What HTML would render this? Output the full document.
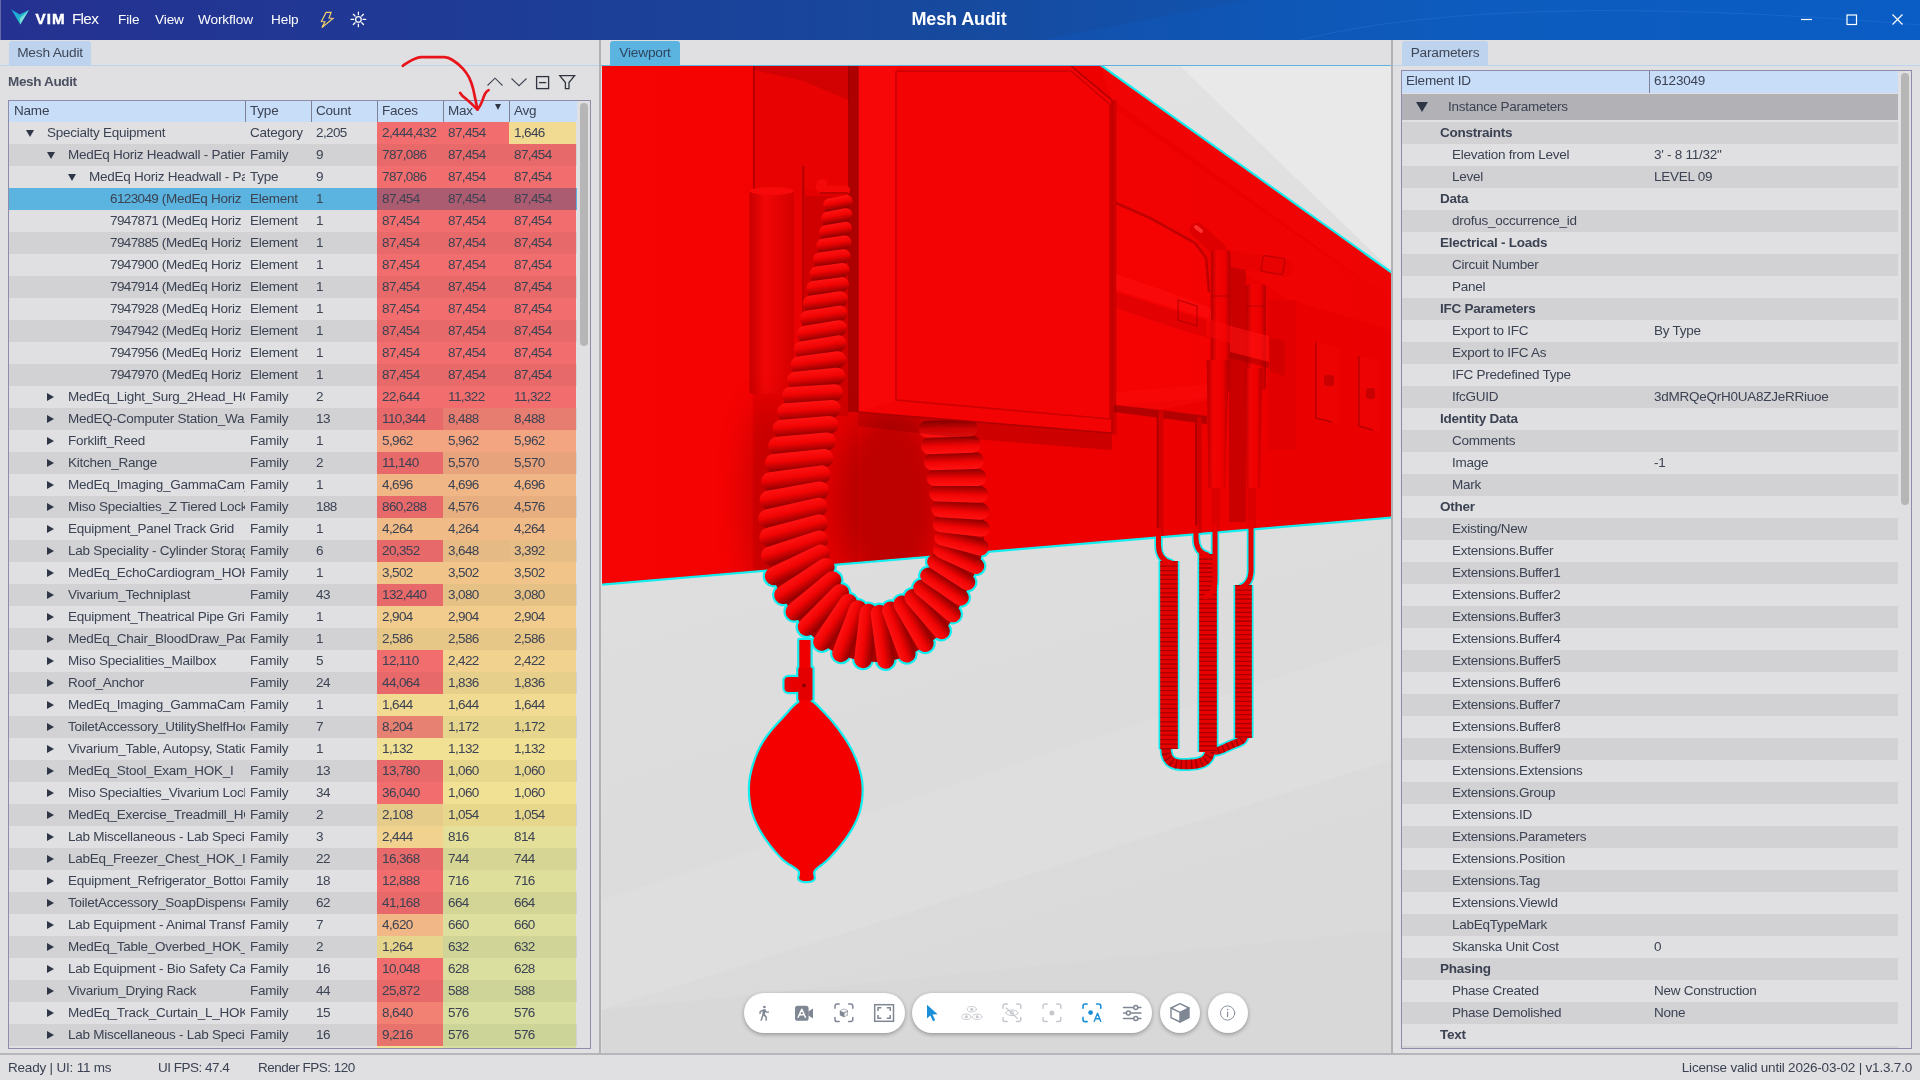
<!DOCTYPE html>
<html lang="en">
<head>
<meta charset="utf-8">
<title>Mesh Audit - VIM Flex</title>
<style>
*{box-sizing:border-box;margin:0;padding:0}
html,body{width:1920px;height:1080px;overflow:hidden}
body{background:#e0e0e3;font-family:"Liberation Sans",sans-serif;font-size:13.5px;color:#3b4252;position:relative}
.abs{position:absolute}
#titlebar{position:absolute;left:0;top:0;width:1920px;height:40px;background:linear-gradient(90deg,#253190 0%,#1e3b95 25%,#164a9f 50%,#0e59b8 75%,#0b5cc2 100%);color:#fff;overflow:hidden}
#titlebar .menu{position:absolute;top:0;height:40px;line-height:39px;font-size:13.6px;letter-spacing:-0.1px;color:#fff;white-space:nowrap}
#titlebar .brand{position:absolute;left:35.5px;top:0;height:40px;line-height:38.5px;font-size:15.5px;color:#fff;white-space:nowrap}
#titlebar .brand b{font-weight:bold;letter-spacing:1.1px;font-size:15.2px;-webkit-text-stroke:0.45px #fff}#titlebar .brand span{margin-left:6.1px;letter-spacing:-0.7px;font-size:15.4px}
#titlebar .title{position:absolute;left:0;width:1918px;top:0;height:40px;line-height:39.600px;text-align:center;font-size:18px;font-weight:bold;color:#fff;letter-spacing:-0.12px}
.tab{position:absolute;top:41px;height:24px;line-height:23.500px;font-size:13.700px;border-radius:3px 3px 0 0;color:#3f4656;background:#bdd3ee;text-align:center;white-space:nowrap;letter-spacing:-0.2px}
.tab.active{background:#5bb4e0;color:#2f4560}
.hline{position:absolute;height:1px}
.vsplit{position:absolute;top:40px;width:2px;height:1013px;background:#b2b2b6}
#status{position:absolute;left:0;top:1053px;width:1920px;height:27px;border-top:2px solid #b6b6ba;background:#e0e0e3;font-size:13.5px;color:#3b4252}
#status span{position:absolute;top:0;line-height:25px;white-space:nowrap;letter-spacing:-0.2px}
.tbl{position:absolute;border:1px solid #8d8dab;overflow:hidden}
.row{position:absolute;left:0;height:22px;line-height:21px;white-space:nowrap;letter-spacing:-0.25px}
.row.d{background:#d2d2d5}
.row.sel{background:#5bb4e0}
.c{position:absolute;top:0;height:22px;overflow:hidden;white-space:nowrap}
.c.n,.ls{letter-spacing:-0.62px}
#left,#right,#status,#titlebar,#vp{will-change:transform}
.hdr{position:absolute;left:0;top:0;height:21px;background:#c8ddf8;line-height:20px;letter-spacing:-0.2px}
.hdr .c{height:21px;border-left:1px solid #7f8296}
.tri{position:absolute;width:0;height:0}
.tri.dn{border-left:4.3px solid transparent;border-right:4.3px solid transparent;border-top:7.3px solid #2f3646}
.tri.rt{border-top:4.35px solid transparent;border-bottom:4.35px solid transparent;border-left:7.4px solid #2f3646}
.sb{position:absolute;background:#b6b6b6;border-radius:4px}
b,.b{font-weight:bold}
</style>
</head>
<body>
<div id="titlebar">
<svg class="abs" style="left:0;top:0" width="1920" height="40" viewBox="0 0 1920 40">
<rect x="0" y="0" width="1" height="40" fill="#6568a4"/>
<polygon points="1040,40 1250,0 1920,0 1920,40" fill="#0a62d4" opacity="0.2"/>
<path d="M1300 40 Q1500 -10 1920 25" stroke="#3a86e8" stroke-width="1" fill="none" opacity="0.25"/>
</svg>
<svg class="abs" style="left:10px;top:8px" width="20" height="18" viewBox="10 8 20 18">
<defs><linearGradient id="lg1" x1="0" y1="0" x2="0.6" y2="1"><stop offset="0" stop-color="#1b9be2"/><stop offset="1" stop-color="#25c8c0"/></linearGradient></defs>
<path d="M11.200 9.200 L19.600 14.500 L28.900 9.900 L20.300 24.500 Z" fill="url(#lg1)"/>
<path d="M19.800 18.500 L28.900 9.900 L20.300 24.500 Z" fill="#9fe6de" opacity="0.750"/>
</svg>
<div class="brand"><b>VIM</b><span>Flex</span></div>
<div class="menu" style="left:118px">File</div>
<div class="menu" style="left:155px">View</div>
<div class="menu" style="left:198px">Workflow</div>
<div class="menu" style="left:271px">Help</div>
<svg class="abs" style="left:316px;top:8px" width="22" height="24" viewBox="316 8 22 24"><path d="M326.100 12.400 L331.100 12.400 L329 18 L333 18.400 L321.900 27.500 L324.900 21.800 L321.400 21.600 Z" fill="none" stroke="#f5d36a" stroke-width="1.150" stroke-linejoin="miter"/></svg>
<svg class="abs" style="left:348px;top:9px" width="22" height="22" viewBox="348 9 22 22" fill="none" stroke="#fff" stroke-width="1.250" stroke-linecap="round"><circle cx="358.400" cy="19.400" r="2.800"/><path d="M358.400 12.100v2.600M358.400 24.100v2.600M351.100 19.400h2.600M363.100 19.400h2.600M353.300 14.300l1.750 1.750M361.750 22.750l1.750 1.750M353.300 24.500l1.750-1.750M361.750 16.050l1.750-1.750"/></svg>
<div class="title">Mesh Audit</div>
<svg class="abs" style="left:1780px;top:0" width="140" height="40" viewBox="0 0 140 40" fill="none" stroke="#fff" stroke-width="1.2"><path d="M21 19.5h11"/><rect x="67" y="15" width="9.5" height="9.5"/><path d="M112.5 14.5l10 10M122.5 14.5l-10 10"/></svg>
</div>
<div id="left">
<div class="tab" style="left:9px;width:82px">Mesh Audit</div>
<div class="hline" style="left:0;top:65px;width:599px;background:#bcd3ee"></div>
<div class="abs b" style="left:8px;top:72px;font-size:13.5px;line-height:20px;color:#4b5060;letter-spacing:-0.35px">Mesh Audit</div>
<svg class="abs" style="left:484px;top:72px" width="96" height="20" viewBox="0 0 96 20" fill="none" stroke="#30343e" stroke-width="1.3">
<path d="M3.5 13.5 L11 6.2 L18.5 13.5" stroke-width="1.05" stroke="#3d4352"/>
<path d="M27.5 6.5 L35 13.700 L42.5 6.5" stroke-width="1.05" stroke="#3d4352"/>
<rect x="52.6" y="4.6" width="12" height="12"/><path d="M55 10.6h7.2"/>
<path d="M75.8 3.6h14.8l-5.6 7v6h-3.6v-6z"/>
</svg>

<div class="tbl" style="left:8px;top:100px;width:583px;height:949px">
<div class="hdr" style="width:568px">
<div class="c" style="left:0px;width:236px;border-left:none;padding-left:5px">Name</div>
<div class="c" style="left:236px;width:66px;padding-left:4px">Type</div>
<div class="c" style="left:302px;width:66px;padding-left:4px">Count</div>
<div class="c" style="left:368px;width:66px;padding-left:4px">Faces</div>
<div class="c" style="left:434px;width:66px;padding-left:4px">Max</div>
<div class="c" style="left:500px;width:68px;padding-left:4px">Avg</div>
<div class="tri dn" style="left:486.200px;top:3.200px;border-left-width:3.800px;border-right-width:3.800px;border-top-width:6.600px"></div>
</div>
<div class="row" style="top:21px;width:568px">
<i class="tri dn" style="left:16.9px;top:7.6px"></i>
<div class="c" style="left:38px;width:198px">Specialty Equipment</div>
<div class="c" style="left:241px;width:61px">Category</div>
<div class="c n" style="left:307px;width:61px">2,205</div>
<div class="c n" style="left:368px;width:66px;background:#f26e6e;padding-left:5px">2,444,432</div>
<div class="c n" style="left:434px;width:66px;background:#f26e6e;padding-left:5px">87,454</div>
<div class="c n" style="left:500px;width:67px;background:#f1db92;padding-left:5px">1,646</div>
</div>
<div class="row d" style="top:43px;width:568px">
<i class="tri dn" style="left:37.9px;top:7.6px"></i>
<div class="c" style="left:59px;width:177px">MedEq Horiz Headwall - Patient Care</div>
<div class="c" style="left:241px;width:61px">Family</div>
<div class="c n" style="left:307px;width:61px">9</div>
<div class="c n" style="left:368px;width:66px;background:#e76969;padding-left:5px">787,086</div>
<div class="c n" style="left:434px;width:66px;background:#e76969;padding-left:5px">87,454</div>
<div class="c n" style="left:500px;width:67px;background:#e76969;padding-left:5px">87,454</div>
</div>
<div class="row" style="top:65px;width:568px">
<i class="tri dn" style="left:58.9px;top:7.6px"></i>
<div class="c" style="left:80px;width:156px">MedEq Horiz Headwall - Patient Care</div>
<div class="c" style="left:241px;width:61px">Type</div>
<div class="c n" style="left:307px;width:61px">9</div>
<div class="c n" style="left:368px;width:66px;background:#f26e6e;padding-left:5px">787,086</div>
<div class="c n" style="left:434px;width:66px;background:#f26e6e;padding-left:5px">87,454</div>
<div class="c n" style="left:500px;width:67px;background:#f26e6e;padding-left:5px">87,454</div>
</div>
<div class="row d sel" style="top:87px;width:568px">
<div class="c" style="left:101px;width:135px"><span class="ls">6123049</span> (MedEq Horiz Headwall</div>
<div class="c" style="left:241px;width:61px">Element</div>
<div class="c n" style="left:307px;width:61px">1</div>
<div class="c n" style="left:368px;width:66px;background:#ac5c70;padding-left:5px">87,454</div>
<div class="c n" style="left:434px;width:66px;background:#ac5c70;padding-left:5px">87,454</div>
<div class="c n" style="left:500px;width:67px;background:#ac5c70;padding-left:5px">87,454</div>
</div>
<div class="row" style="top:109px;width:568px">
<div class="c" style="left:101px;width:135px"><span class="ls">7947871</span> (MedEq Horiz Headwall</div>
<div class="c" style="left:241px;width:61px">Element</div>
<div class="c n" style="left:307px;width:61px">1</div>
<div class="c n" style="left:368px;width:66px;background:#f26e6e;padding-left:5px">87,454</div>
<div class="c n" style="left:434px;width:66px;background:#f26e6e;padding-left:5px">87,454</div>
<div class="c n" style="left:500px;width:67px;background:#f26e6e;padding-left:5px">87,454</div>
</div>
<div class="row d" style="top:131px;width:568px">
<div class="c" style="left:101px;width:135px"><span class="ls">7947885</span> (MedEq Horiz Headwall</div>
<div class="c" style="left:241px;width:61px">Element</div>
<div class="c n" style="left:307px;width:61px">1</div>
<div class="c n" style="left:368px;width:66px;background:#e76969;padding-left:5px">87,454</div>
<div class="c n" style="left:434px;width:66px;background:#e76969;padding-left:5px">87,454</div>
<div class="c n" style="left:500px;width:67px;background:#e76969;padding-left:5px">87,454</div>
</div>
<div class="row" style="top:153px;width:568px">
<div class="c" style="left:101px;width:135px"><span class="ls">7947900</span> (MedEq Horiz Headwall</div>
<div class="c" style="left:241px;width:61px">Element</div>
<div class="c n" style="left:307px;width:61px">1</div>
<div class="c n" style="left:368px;width:66px;background:#f26e6e;padding-left:5px">87,454</div>
<div class="c n" style="left:434px;width:66px;background:#f26e6e;padding-left:5px">87,454</div>
<div class="c n" style="left:500px;width:67px;background:#f26e6e;padding-left:5px">87,454</div>
</div>
<div class="row d" style="top:175px;width:568px">
<div class="c" style="left:101px;width:135px"><span class="ls">7947914</span> (MedEq Horiz Headwall</div>
<div class="c" style="left:241px;width:61px">Element</div>
<div class="c n" style="left:307px;width:61px">1</div>
<div class="c n" style="left:368px;width:66px;background:#e76969;padding-left:5px">87,454</div>
<div class="c n" style="left:434px;width:66px;background:#e76969;padding-left:5px">87,454</div>
<div class="c n" style="left:500px;width:67px;background:#e76969;padding-left:5px">87,454</div>
</div>
<div class="row" style="top:197px;width:568px">
<div class="c" style="left:101px;width:135px"><span class="ls">7947928</span> (MedEq Horiz Headwall</div>
<div class="c" style="left:241px;width:61px">Element</div>
<div class="c n" style="left:307px;width:61px">1</div>
<div class="c n" style="left:368px;width:66px;background:#f26e6e;padding-left:5px">87,454</div>
<div class="c n" style="left:434px;width:66px;background:#f26e6e;padding-left:5px">87,454</div>
<div class="c n" style="left:500px;width:67px;background:#f26e6e;padding-left:5px">87,454</div>
</div>
<div class="row d" style="top:219px;width:568px">
<div class="c" style="left:101px;width:135px"><span class="ls">7947942</span> (MedEq Horiz Headwall</div>
<div class="c" style="left:241px;width:61px">Element</div>
<div class="c n" style="left:307px;width:61px">1</div>
<div class="c n" style="left:368px;width:66px;background:#e76969;padding-left:5px">87,454</div>
<div class="c n" style="left:434px;width:66px;background:#e76969;padding-left:5px">87,454</div>
<div class="c n" style="left:500px;width:67px;background:#e76969;padding-left:5px">87,454</div>
</div>
<div class="row" style="top:241px;width:568px">
<div class="c" style="left:101px;width:135px"><span class="ls">7947956</span> (MedEq Horiz Headwall</div>
<div class="c" style="left:241px;width:61px">Element</div>
<div class="c n" style="left:307px;width:61px">1</div>
<div class="c n" style="left:368px;width:66px;background:#f26e6e;padding-left:5px">87,454</div>
<div class="c n" style="left:434px;width:66px;background:#f26e6e;padding-left:5px">87,454</div>
<div class="c n" style="left:500px;width:67px;background:#f26e6e;padding-left:5px">87,454</div>
</div>
<div class="row d" style="top:263px;width:568px">
<div class="c" style="left:101px;width:135px"><span class="ls">7947970</span> (MedEq Horiz Headwall</div>
<div class="c" style="left:241px;width:61px">Element</div>
<div class="c n" style="left:307px;width:61px">1</div>
<div class="c n" style="left:368px;width:66px;background:#e76969;padding-left:5px">87,454</div>
<div class="c n" style="left:434px;width:66px;background:#e76969;padding-left:5px">87,454</div>
<div class="c n" style="left:500px;width:67px;background:#e76969;padding-left:5px">87,454</div>
</div>
<div class="row" style="top:285px;width:568px">
<i class="tri rt" style="left:38.0px;top:6.6px"></i>
<div class="c" style="left:59px;width:177px">MedEq_Light_Surg_2Head_HOK_I</div>
<div class="c" style="left:241px;width:61px">Family</div>
<div class="c n" style="left:307px;width:61px">2</div>
<div class="c n" style="left:368px;width:66px;background:#f26e6e;padding-left:5px">22,644</div>
<div class="c n" style="left:434px;width:66px;background:#f26e6e;padding-left:5px">11,322</div>
<div class="c n" style="left:500px;width:67px;background:#f26e6e;padding-left:5px">11,322</div>
</div>
<div class="row d" style="top:307px;width:568px">
<i class="tri rt" style="left:38.0px;top:6.6px"></i>
<div class="c" style="left:59px;width:177px">MedEQ-Computer Station_Wall</div>
<div class="c" style="left:241px;width:61px">Family</div>
<div class="c n" style="left:307px;width:61px">13</div>
<div class="c n" style="left:368px;width:66px;background:#e76969;padding-left:5px">110,344</div>
<div class="c n" style="left:434px;width:66px;background:#e77d70;padding-left:5px">8,488</div>
<div class="c n" style="left:500px;width:67px;background:#e77d70;padding-left:5px">8,488</div>
</div>
<div class="row" style="top:329px;width:568px">
<i class="tri rt" style="left:38.0px;top:6.6px"></i>
<div class="c" style="left:59px;width:177px">Forklift_Reed</div>
<div class="c" style="left:241px;width:61px">Family</div>
<div class="c n" style="left:307px;width:61px">1</div>
<div class="c n" style="left:368px;width:66px;background:#f2a580;padding-left:5px">5,962</div>
<div class="c n" style="left:434px;width:66px;background:#f2a580;padding-left:5px">5,962</div>
<div class="c n" style="left:500px;width:67px;background:#f2a580;padding-left:5px">5,962</div>
</div>
<div class="row d" style="top:351px;width:568px">
<i class="tri rt" style="left:38.0px;top:6.6px"></i>
<div class="c" style="left:59px;width:177px">Kitchen_Range</div>
<div class="c" style="left:241px;width:61px">Family</div>
<div class="c n" style="left:307px;width:61px">2</div>
<div class="c n" style="left:368px;width:66px;background:#e76969;padding-left:5px">11,140</div>
<div class="c n" style="left:434px;width:66px;background:#e7a37c;padding-left:5px">5,570</div>
<div class="c n" style="left:500px;width:67px;background:#e7a37c;padding-left:5px">5,570</div>
</div>
<div class="row" style="top:373px;width:568px">
<i class="tri rt" style="left:38.0px;top:6.6px"></i>
<div class="c" style="left:59px;width:177px">MedEq_Imaging_GammaCam_HOK</div>
<div class="c" style="left:241px;width:61px">Family</div>
<div class="c n" style="left:307px;width:61px">1</div>
<div class="c n" style="left:368px;width:66px;background:#f1b685;padding-left:5px">4,696</div>
<div class="c n" style="left:434px;width:66px;background:#f1b685;padding-left:5px">4,696</div>
<div class="c n" style="left:500px;width:67px;background:#f1b685;padding-left:5px">4,696</div>
</div>
<div class="row d" style="top:395px;width:568px">
<i class="tri rt" style="left:38.0px;top:6.6px"></i>
<div class="c" style="left:59px;width:177px">Miso Specialties_Z Tiered Locker</div>
<div class="c" style="left:241px;width:61px">Family</div>
<div class="c n" style="left:307px;width:61px">188</div>
<div class="c n" style="left:368px;width:66px;background:#e76969;padding-left:5px">860,288</div>
<div class="c n" style="left:434px;width:66px;background:#e7af80;padding-left:5px">4,576</div>
<div class="c n" style="left:500px;width:67px;background:#e7af80;padding-left:5px">4,576</div>
</div>
<div class="row" style="top:417px;width:568px">
<i class="tri rt" style="left:38.0px;top:6.6px"></i>
<div class="c" style="left:59px;width:177px">Equipment_Panel Track Grid</div>
<div class="c" style="left:241px;width:61px">Family</div>
<div class="c n" style="left:307px;width:61px">1</div>
<div class="c n" style="left:368px;width:66px;background:#f1bb87;padding-left:5px">4,264</div>
<div class="c n" style="left:434px;width:66px;background:#f1bb87;padding-left:5px">4,264</div>
<div class="c n" style="left:500px;width:67px;background:#f1bb87;padding-left:5px">4,264</div>
</div>
<div class="row d" style="top:439px;width:568px">
<i class="tri rt" style="left:38.0px;top:6.6px"></i>
<div class="c" style="left:59px;width:177px">Lab Speciality - Cylinder Storage</div>
<div class="c" style="left:241px;width:61px">Family</div>
<div class="c n" style="left:307px;width:61px">6</div>
<div class="c n" style="left:368px;width:66px;background:#e76969;padding-left:5px">20,352</div>
<div class="c n" style="left:434px;width:66px;background:#e6ba84;padding-left:5px">3,648</div>
<div class="c n" style="left:500px;width:67px;background:#e6bd85;padding-left:5px">3,392</div>
</div>
<div class="row" style="top:461px;width:568px">
<i class="tri rt" style="left:38.0px;top:6.6px"></i>
<div class="c" style="left:59px;width:177px">MedEq_EchoCardiogram_HOK_I</div>
<div class="c" style="left:241px;width:61px">Family</div>
<div class="c n" style="left:307px;width:61px">1</div>
<div class="c n" style="left:368px;width:66px;background:#f1c58a;padding-left:5px">3,502</div>
<div class="c n" style="left:434px;width:66px;background:#f1c58a;padding-left:5px">3,502</div>
<div class="c n" style="left:500px;width:67px;background:#f1c58a;padding-left:5px">3,502</div>
</div>
<div class="row d" style="top:483px;width:568px">
<i class="tri rt" style="left:38.0px;top:6.6px"></i>
<div class="c" style="left:59px;width:177px">Vivarium_Techniplast</div>
<div class="c" style="left:241px;width:61px">Family</div>
<div class="c n" style="left:307px;width:61px">43</div>
<div class="c n" style="left:368px;width:66px;background:#e76969;padding-left:5px">132,440</div>
<div class="c n" style="left:434px;width:66px;background:#e6c186;padding-left:5px">3,080</div>
<div class="c n" style="left:500px;width:67px;background:#e6c186;padding-left:5px">3,080</div>
</div>
<div class="row" style="top:505px;width:568px">
<i class="tri rt" style="left:38.0px;top:6.6px"></i>
<div class="c" style="left:59px;width:177px">Equipment_Theatrical Pipe Grid</div>
<div class="c" style="left:241px;width:61px">Family</div>
<div class="c n" style="left:307px;width:61px">1</div>
<div class="c n" style="left:368px;width:66px;background:#f1cc8d;padding-left:5px">2,904</div>
<div class="c n" style="left:434px;width:66px;background:#f1cc8d;padding-left:5px">2,904</div>
<div class="c n" style="left:500px;width:67px;background:#f1cc8d;padding-left:5px">2,904</div>
</div>
<div class="row d" style="top:527px;width:568px">
<i class="tri rt" style="left:38.0px;top:6.6px"></i>
<div class="c" style="left:59px;width:177px">MedEq_Chair_BloodDraw_Padded</div>
<div class="c" style="left:241px;width:61px">Family</div>
<div class="c n" style="left:307px;width:61px">1</div>
<div class="c n" style="left:368px;width:66px;background:#e6c788;padding-left:5px">2,586</div>
<div class="c n" style="left:434px;width:66px;background:#e6c788;padding-left:5px">2,586</div>
<div class="c n" style="left:500px;width:67px;background:#e6c788;padding-left:5px">2,586</div>
</div>
<div class="row" style="top:549px;width:568px">
<i class="tri rt" style="left:38.0px;top:6.6px"></i>
<div class="c" style="left:59px;width:177px">Miso Specialities_Mailbox</div>
<div class="c" style="left:241px;width:61px">Family</div>
<div class="c n" style="left:307px;width:61px">5</div>
<div class="c n" style="left:368px;width:66px;background:#f26e6e;padding-left:5px">12,110</div>
<div class="c n" style="left:434px;width:66px;background:#f1d28f;padding-left:5px">2,422</div>
<div class="c n" style="left:500px;width:67px;background:#f1d28f;padding-left:5px">2,422</div>
</div>
<div class="row d" style="top:571px;width:568px">
<i class="tri rt" style="left:38.0px;top:6.6px"></i>
<div class="c" style="left:59px;width:177px">Roof_Anchor</div>
<div class="c" style="left:241px;width:61px">Family</div>
<div class="c n" style="left:307px;width:61px">24</div>
<div class="c n" style="left:368px;width:66px;background:#e76969;padding-left:5px">44,064</div>
<div class="c n" style="left:434px;width:66px;background:#e6cf8b;padding-left:5px">1,836</div>
<div class="c n" style="left:500px;width:67px;background:#e6cf8b;padding-left:5px">1,836</div>
</div>
<div class="row" style="top:593px;width:568px">
<i class="tri rt" style="left:38.0px;top:6.6px"></i>
<div class="c" style="left:59px;width:177px">MedEq_Imaging_GammaCam_HOK</div>
<div class="c" style="left:241px;width:61px">Family</div>
<div class="c n" style="left:307px;width:61px">1</div>
<div class="c n" style="left:368px;width:66px;background:#f1db92;padding-left:5px">1,644</div>
<div class="c n" style="left:434px;width:66px;background:#f1db92;padding-left:5px">1,644</div>
<div class="c n" style="left:500px;width:67px;background:#f1db92;padding-left:5px">1,644</div>
</div>
<div class="row d" style="top:615px;width:568px">
<i class="tri rt" style="left:38.0px;top:6.6px"></i>
<div class="c" style="left:59px;width:177px">ToiletAccessory_UtilityShelfHook</div>
<div class="c" style="left:241px;width:61px">Family</div>
<div class="c n" style="left:307px;width:61px">7</div>
<div class="c n" style="left:368px;width:66px;background:#e78171;padding-left:5px">8,204</div>
<div class="c n" style="left:434px;width:66px;background:#e6d68d;padding-left:5px">1,172</div>
<div class="c n" style="left:500px;width:67px;background:#e6d68d;padding-left:5px">1,172</div>
</div>
<div class="row" style="top:637px;width:568px">
<i class="tri rt" style="left:38.0px;top:6.6px"></i>
<div class="c" style="left:59px;width:177px">Vivarium_Table, Autopsy, Station</div>
<div class="c" style="left:241px;width:61px">Family</div>
<div class="c n" style="left:307px;width:61px">1</div>
<div class="c n" style="left:368px;width:66px;background:#f1e194;padding-left:5px">1,132</div>
<div class="c n" style="left:434px;width:66px;background:#f1e194;padding-left:5px">1,132</div>
<div class="c n" style="left:500px;width:67px;background:#f1e194;padding-left:5px">1,132</div>
</div>
<div class="row d" style="top:659px;width:568px">
<i class="tri rt" style="left:38.0px;top:6.6px"></i>
<div class="c" style="left:59px;width:177px">MedEq_Stool_Exam_HOK_I</div>
<div class="c" style="left:241px;width:61px">Family</div>
<div class="c n" style="left:307px;width:61px">13</div>
<div class="c n" style="left:368px;width:66px;background:#e76969;padding-left:5px">13,780</div>
<div class="c n" style="left:434px;width:66px;background:#e6d78d;padding-left:5px">1,060</div>
<div class="c n" style="left:500px;width:67px;background:#e6d78d;padding-left:5px">1,060</div>
</div>
<div class="row" style="top:681px;width:568px">
<i class="tri rt" style="left:38.0px;top:6.6px"></i>
<div class="c" style="left:59px;width:177px">Miso Specialties_Vivarium Locker</div>
<div class="c" style="left:241px;width:61px">Family</div>
<div class="c n" style="left:307px;width:61px">34</div>
<div class="c n" style="left:368px;width:66px;background:#f26e6e;padding-left:5px">36,040</div>
<div class="c n" style="left:434px;width:66px;background:#f1e194;padding-left:5px">1,060</div>
<div class="c n" style="left:500px;width:67px;background:#f1e194;padding-left:5px">1,060</div>
</div>
<div class="row d" style="top:703px;width:568px">
<i class="tri rt" style="left:38.0px;top:6.6px"></i>
<div class="c" style="left:59px;width:177px">MedEq_Exercise_Treadmill_HOK</div>
<div class="c" style="left:241px;width:61px">Family</div>
<div class="c n" style="left:307px;width:61px">2</div>
<div class="c n" style="left:368px;width:66px;background:#e6cc8a;padding-left:5px">2,108</div>
<div class="c n" style="left:434px;width:66px;background:#e6d78d;padding-left:5px">1,054</div>
<div class="c n" style="left:500px;width:67px;background:#e6d78d;padding-left:5px">1,054</div>
</div>
<div class="row" style="top:725px;width:568px">
<i class="tri rt" style="left:38.0px;top:6.6px"></i>
<div class="c" style="left:59px;width:177px">Lab Miscellaneous - Lab Specialty</div>
<div class="c" style="left:241px;width:61px">Family</div>
<div class="c n" style="left:307px;width:61px">3</div>
<div class="c n" style="left:368px;width:66px;background:#f1d28f;padding-left:5px">2,444</div>
<div class="c n" style="left:434px;width:66px;background:#e5e099;padding-left:5px">816</div>
<div class="c n" style="left:500px;width:67px;background:#e5e099;padding-left:5px">814</div>
</div>
<div class="row d" style="top:747px;width:568px">
<i class="tri rt" style="left:38.0px;top:6.6px"></i>
<div class="c" style="left:59px;width:177px">LabEq_Freezer_Chest_HOK_I</div>
<div class="c" style="left:241px;width:61px">Family</div>
<div class="c n" style="left:307px;width:61px">22</div>
<div class="c n" style="left:368px;width:66px;background:#e76969;padding-left:5px">16,368</div>
<div class="c n" style="left:434px;width:66px;background:#d6d594;padding-left:5px">744</div>
<div class="c n" style="left:500px;width:67px;background:#d6d594;padding-left:5px">744</div>
</div>
<div class="row" style="top:769px;width:568px">
<i class="tri rt" style="left:38.0px;top:6.6px"></i>
<div class="c" style="left:59px;width:177px">Equipment_Refrigerator_Bottom</div>
<div class="c" style="left:241px;width:61px">Family</div>
<div class="c n" style="left:307px;width:61px">18</div>
<div class="c n" style="left:368px;width:66px;background:#f26e6e;padding-left:5px">12,888</div>
<div class="c n" style="left:434px;width:66px;background:#dfdf9c;padding-left:5px">716</div>
<div class="c n" style="left:500px;width:67px;background:#dfdf9c;padding-left:5px">716</div>
</div>
<div class="row d" style="top:791px;width:568px">
<i class="tri rt" style="left:38.0px;top:6.6px"></i>
<div class="c" style="left:59px;width:177px">ToiletAccessory_SoapDispenser</div>
<div class="c" style="left:241px;width:61px">Family</div>
<div class="c n" style="left:307px;width:61px">62</div>
<div class="c n" style="left:368px;width:66px;background:#e76969;padding-left:5px">41,168</div>
<div class="c n" style="left:434px;width:66px;background:#d2d596;padding-left:5px">664</div>
<div class="c n" style="left:500px;width:67px;background:#d2d596;padding-left:5px">664</div>
</div>
<div class="row" style="top:813px;width:568px">
<i class="tri rt" style="left:38.0px;top:6.6px"></i>
<div class="c" style="left:59px;width:177px">Lab Equipment - Animal Transfer</div>
<div class="c" style="left:241px;width:61px">Family</div>
<div class="c n" style="left:307px;width:61px">7</div>
<div class="c n" style="left:368px;width:66px;background:#f1b786;padding-left:5px">4,620</div>
<div class="c n" style="left:434px;width:66px;background:#dcdf9d;padding-left:5px">660</div>
<div class="c n" style="left:500px;width:67px;background:#dcdf9d;padding-left:5px">660</div>
</div>
<div class="row d" style="top:835px;width:568px">
<i class="tri rt" style="left:38.0px;top:6.6px"></i>
<div class="c" style="left:59px;width:177px">MedEq_Table_Overbed_HOK_I</div>
<div class="c" style="left:241px;width:61px">Family</div>
<div class="c n" style="left:307px;width:61px">2</div>
<div class="c n" style="left:368px;width:66px;background:#e6d58d;padding-left:5px">1,264</div>
<div class="c n" style="left:434px;width:66px;background:#d0d597;padding-left:5px">632</div>
<div class="c n" style="left:500px;width:67px;background:#d0d597;padding-left:5px">632</div>
</div>
<div class="row" style="top:857px;width:568px">
<i class="tri rt" style="left:38.0px;top:6.6px"></i>
<div class="c" style="left:59px;width:177px">Lab Equipment - Bio Safety Cabinet</div>
<div class="c" style="left:241px;width:61px">Family</div>
<div class="c n" style="left:307px;width:61px">16</div>
<div class="c n" style="left:368px;width:66px;background:#f26e6e;padding-left:5px">10,048</div>
<div class="c n" style="left:434px;width:66px;background:#dade9e;padding-left:5px">628</div>
<div class="c n" style="left:500px;width:67px;background:#dade9e;padding-left:5px">628</div>
</div>
<div class="row d" style="top:879px;width:568px">
<i class="tri rt" style="left:38.0px;top:6.6px"></i>
<div class="c" style="left:59px;width:177px">Vivarium_Drying Rack</div>
<div class="c" style="left:241px;width:61px">Family</div>
<div class="c n" style="left:307px;width:61px">44</div>
<div class="c n" style="left:368px;width:66px;background:#e76969;padding-left:5px">25,872</div>
<div class="c n" style="left:434px;width:66px;background:#ced498;padding-left:5px">588</div>
<div class="c n" style="left:500px;width:67px;background:#ced498;padding-left:5px">588</div>
</div>
<div class="row" style="top:901px;width:568px">
<i class="tri rt" style="left:38.0px;top:6.6px"></i>
<div class="c" style="left:59px;width:177px">MedEq_Track_Curtain_L_HOK_I</div>
<div class="c" style="left:241px;width:61px">Family</div>
<div class="c n" style="left:307px;width:61px">15</div>
<div class="c n" style="left:368px;width:66px;background:#f28174;padding-left:5px">8,640</div>
<div class="c n" style="left:434px;width:66px;background:#d7de9f;padding-left:5px">576</div>
<div class="c n" style="left:500px;width:67px;background:#d7de9f;padding-left:5px">576</div>
</div>
<div class="row d" style="top:923px;width:568px">
<i class="tri rt" style="left:38.0px;top:6.6px"></i>
<div class="c" style="left:59px;width:177px">Lab Miscellaneous - Lab Specialty</div>
<div class="c" style="left:241px;width:61px">Family</div>
<div class="c n" style="left:307px;width:61px">16</div>
<div class="c n" style="left:368px;width:66px;background:#e7736c;padding-left:5px">9,216</div>
<div class="c n" style="left:434px;width:66px;background:#cdd498;padding-left:5px">576</div>
<div class="c n" style="left:500px;width:67px;background:#cdd498;padding-left:5px">576</div>
</div>
<div class="row" style="top:945px;width:568px">
<i class="tri rt" style="left:38.0px;top:6.6px"></i>
<div class="c" style="left:59px;width:177px">Equipment_Shelving</div>
<div class="c" style="left:241px;width:61px">Family</div>
<div class="c n" style="left:307px;width:61px">2</div>
<div class="c n" style="left:368px;width:66px;background:#f1e194;padding-left:5px">1,120</div>
<div class="c n" style="left:434px;width:66px;background:#d6dea0;padding-left:5px">560</div>
<div class="c n" style="left:500px;width:67px;background:#d6dea0;padding-left:5px">560</div>
</div>
<div class="sb" style="left:571px;top:2px;width:8px;height:243px"></div>
</div>
</div>
<div id="vp">
<div class="tab active" style="left:610px;width:70px">Viewport</div>
<div class="hline" style="left:601px;top:65px;width:790px;background:#5bb4e0"></div>
<svg class="abs" style="left:602px;top:66px" width="789" height="987" viewBox="602 66 789 987">
<defs>
<linearGradient id="bgg" x1="0" y1="0" x2="0.25" y2="1"><stop offset="0" stop-color="#e4e4e4"/><stop offset="0.5" stop-color="#dedede"/><stop offset="1" stop-color="#dadada"/></linearGradient>
<linearGradient id="rg" x1="0" y1="0" x2="0" y2="1"><stop offset="0" stop-color="#ff1212"/><stop offset="0.45" stop-color="#f00404"/><stop offset="1" stop-color="#8e0000"/></linearGradient>
<linearGradient id="cyl" x1="0" y1="0" x2="1" y2="0"><stop offset="0" stop-color="#c80000"/><stop offset="0.35" stop-color="#f20606"/><stop offset="1" stop-color="#d40000"/></linearGradient>
<linearGradient id="bandg" x1="0" y1="0" x2="1" y2="0"><stop offset="0" stop-color="#f30000"/><stop offset="0.5" stop-color="#ef0000"/><stop offset="1" stop-color="#ea0000"/></linearGradient>
<clipPath id="bandclip"><polygon points="602,66 1100,66 1391,273.400 1391,516.500 602,583.500"/></clipPath>
<filter id="sh2" x="-50%" y="-50%" width="200%" height="200%"><feGaussianBlur stdDeviation="14"/></filter>
<filter id="sh" x="-20%" y="-40%" width="140%" height="200%"><feGaussianBlur stdDeviation="2.2"/></filter>
</defs>
<rect x="602" y="66" width="789" height="987" fill="url(#bgg)"/>
<g><polygon points="602,900 1391,640 1391,760 602,1010" fill="#e6e6e6" opacity="0.3"/><polygon points="602,1053 602,1010 1391,930 1391,1053" fill="#d4d4d4" opacity="0.4"/><polygon points="1180,66 1391,66 1391,270" fill="#ececec" opacity="0.7"/></g>
<g fill="#12eef0" stroke="#12eef0" stroke-width="4.400" stroke-linejoin="round">
<polygon points="602,66 1100,66 1391,273.400 1391,516.500 602,583.500"/>
<rect x="-35.1" y="-9.2" width="70.1" height="18.3" rx="9.2" transform="translate(794.7 547.7) rotate(-18.2)" />
<rect x="-35.0" y="-9.2" width="70.1" height="18.3" rx="9.2" transform="translate(797.4 565.0) rotate(-25.6)" />
<rect x="-34.4" y="-9.1" width="68.7" height="18.1" rx="9.1" transform="translate(804.5 581.0) rotate(-33.4)" />
<rect x="-33.5" y="-8.9" width="67.1" height="17.9" rx="8.9" transform="translate(813.4 595.9) rotate(-39.7)" />
<rect x="-32.8" y="-8.8" width="65.7" height="17.7" rx="8.8" transform="translate(823.4 609.9) rotate(-45.5)" />
<rect x="-32.4" y="-8.8" width="64.9" height="17.6" rx="8.8" transform="translate(835.1 622.3) rotate(-56.2)" />
<rect x="-32.5" y="-8.8" width="65.0" height="17.6" rx="8.8" transform="translate(849.5 631.2) rotate(-69.1)" />
<rect x="-32.3" y="-8.8" width="64.7" height="17.6" rx="8.8" transform="translate(865.7 636.0) rotate(-83.4)" />
<rect x="-32.2" y="-8.8" width="64.4" height="17.5" rx="8.8" transform="translate(882.6 636.8) rotate(-97.7)" />
<rect x="-31.9" y="-8.7" width="63.9" height="17.4" rx="8.7" transform="translate(898.8 632.1) rotate(-110.4)" />
<rect x="-31.3" y="-8.6" width="62.6" height="17.3" rx="8.6" transform="translate(913.5 623.8) rotate(-120.4)" />
<rect x="-30.4" y="-8.5" width="60.8" height="17.0" rx="8.5" transform="translate(927.1 614.1) rotate(-130.6)" />
<rect x="-28.6" y="-8.3" width="57.2" height="16.5" rx="8.3" transform="translate(937.1 601.0) rotate(-140.0)" />
<rect x="-27.6" y="-8.1" width="55.2" height="16.2" rx="8.1" transform="translate(944.5 586.6) rotate(-145.9)" />
<rect x="-27.0" y="-8.0" width="54.0" height="16.1" rx="8.0" transform="translate(951.2 572.0) rotate(-147.5)" />
<rect x="-27.2" y="-8.1" width="54.5" height="16.1" rx="8.1" transform="translate(958.7 558.0) rotate(-155.4)" />
<rect x="-27.9" y="-8.2" width="55.9" height="16.3" rx="8.2" transform="translate(961.5 542.4) rotate(-165.3)" />
<path d="M805.0 700.0 C812.2 699.5 819.2 709.0 826.0 716.0 C832.8 723.0 840.8 733.8 846.0 742.0 C851.2 750.2 854.4 757.5 857.0 765.0 C859.6 772.5 861.2 779.2 861.5 787.0 C861.8 794.8 860.9 804.0 858.5 812.0 C856.1 820.0 852.1 827.3 847.0 835.0 C841.9 842.7 833.5 852.2 828.0 858.0 C822.5 863.8 816.4 866.5 814.0 870.0 C811.6 873.5 814.8 877.2 813.5 879.0 C812.2 880.8 808.3 881.0 806.0 881.0 C803.7 881.0 800.7 880.8 799.5 879.0 C798.3 877.2 801.8 873.5 799.0 870.0 C796.2 866.5 788.3 863.8 782.5 858.0 C776.7 852.2 768.9 842.7 764.0 835.0 C759.1 827.3 755.3 820.0 753.0 812.0 C750.7 804.0 749.8 794.8 750.0 787.0 C750.2 779.2 751.7 772.5 754.0 765.0 C756.3 757.5 759.2 749.7 764.0 742.0 C768.8 734.3 776.2 726.0 783.0 719.0 C789.8 712.0 797.8 700.5 805.0 700.0Z"/>
<rect x="799.3" y="640" width="11.2" height="62"/>
<rect x="798.3" y="667.5" width="14.2" height="33" rx="1.5"/>
<rect x="784.5" y="677" width="16" height="15" rx="4"/>
</g>
<g fill="none" stroke="#12eef0" stroke-linecap="round">
<path d="M1169 561 L1169 749 M1208 554 L1208 752" stroke-width="21" stroke-linecap="butt"/><path d="M1243.5 585 L1243.5 738" stroke-width="20" stroke-linecap="butt"/><path d="M1166 748 C1166 764 1176 765 1188 764.500 C1200 764 1209 762 1210 751" stroke-width="13"/><path d="M1213 750 C1216 753 1224 748 1230 745.500 C1238 742 1242 742 1244 737" stroke-width="11"/>
<path d="M1158.5 530 L1158.5 545 C1158.5 556 1163 561 1171 563" stroke-width="8.4"/>
<path d="M1196 528 L1196 538 C1196 548 1200 553 1207 555" stroke-width="8.4"/>
<path d="M1215 526 L1215 580 C1215 590 1211 595 1205 597" stroke-width="8.4"/>
<path d="M1251 522 L1251 570 C1251 580 1247 585 1242 587" stroke-width="8.4"/>
</g>
<polygon points="602,66 1100,66 1391,273.400 1391,516.500 602,583.500" fill="url(#bandg)"/>
<g clip-path="url(#bandclip)">
<rect x="602" y="66" width="150" height="530" fill="#ff0a0a" opacity="0.25"/>
<rect x="753" y="66" width="105" height="530" fill="#a00000" opacity="0.16"/>
<polygon points="753,66 849,66 849,100 800,80 753,70" fill="#7a0000" opacity="0.25"/>
<rect x="848" y="66" width="10" height="346" fill="#6a0000" opacity="0.45"/>
<rect x="753" y="66" width="2" height="125" fill="#7a0000" opacity="0.4"/>
<rect x="755" y="66" width="93" height="124" fill="#ff0c0c" opacity="0.18"/>
<rect x="749.5" y="190" width="44.5" height="204" rx="3" fill="url(#cyl)"/>
<ellipse cx="771.7" cy="191" rx="22.2" ry="4" fill="#f80a0a"/>
<rect x="794" y="163" width="10.5" height="300" rx="5" fill="#e80202"/><rect x="802" y="166" width="2.5" height="290" fill="#8a0000" opacity="0.45"/>
<rect x="805" y="196" width="43" height="220" fill="#8a0000" opacity="0.22"/>
<ellipse cx="890" cy="500" rx="52" ry="90" fill="#8a0000" opacity="0.5" filter="url(#sh2)"/>
<ellipse cx="770" cy="500" rx="26" ry="100" fill="#8a0000" opacity="0.35" filter="url(#sh2)"/>
<path d="M823 183 C819 183 818 190 824 190 L846 190" stroke="#f40808" stroke-width="8" fill="none" stroke-linecap="round"/><path d="M820 193 L848 193" stroke="#8a0000" stroke-width="2" opacity="0.5"/>
</g>
<polygon points="850.0,204.1 849.4,217.6 848.8,231.5 847.9,245.6 846.8,259.9 845.7,274.1 844.6,288.7 843.5,303.3 842.7,318.2 842.0,333.3 841.3,348.8 840.5,365.4 839.2,382.3 836.5,399.2 834.0,415.6 831.4,432.2 828.8,448.8 826.2,465.7 823.7,481.9 822.5,497.4 821.5,512.9 821.8,528.8 822.5,544.1 824.3,557.2 829.3,569.2 835.9,581.2 843.4,593.0 851.0,601.7 859.9,607.4 869.3,610.4 879.2,611.3 889.3,608.4 899.8,602.9 910.0,596.7 918.3,588.0 924.9,576.4 931.6,563.1 937.8,551.8 939.3,539.8 938.3,527.1 936.9,511.9 935.1,496.5 932.9,481.0 930.1,465.2 927.2,449.1 924.7,432.6 971.5,424.8 974.6,440.9 977.6,457.2 980.4,474.0 982.4,491.1 983.7,508.3 984.3,525.6 983.7,545.0 979.6,564.3 970.9,581.0 964.1,596.7 955.9,614.0 944.2,631.4 927.2,644.8 908.3,655.9 886.1,662.3 862.2,661.6 839.1,655.0 819.2,642.8 803.3,626.9 790.9,610.5 779.6,592.8 770.5,572.8 766.9,551.4 765.6,531.7 764.7,512.4 766.3,493.0 768.4,473.6 771.9,455.6 775.4,438.4 779.7,421.5 783.9,405.0 788.6,388.9 793.0,373.8 796.1,358.9 798.8,344.0 801.7,328.6 804.5,313.3 807.5,298.3 810.7,283.7 813.8,269.4 816.8,255.5 819.8,242.0 822.3,228.6 824.2,215.3 826.0,201.9" fill="#a40000"/>
<g fill="url(#rg)">
<rect x="-15.0" y="-6.3" width="30.0" height="12.7" rx="6.3" transform="translate(838.0 203.0) rotate(-10.8)" />
<rect x="-15.8" y="-6.5" width="31.6" height="12.9" rx="6.5" transform="translate(836.8 216.4) rotate(-10.8)" />
<rect x="-16.6" y="-6.6" width="33.3" height="13.2" rx="6.6" transform="translate(835.5 230.1) rotate(-9.7)" />
<rect x="-17.7" y="-6.7" width="35.4" height="13.5" rx="6.7" transform="translate(833.9 243.8) rotate(-8.7)" />
<rect x="-18.9" y="-6.9" width="37.8" height="13.8" rx="6.9" transform="translate(831.8 257.7) rotate(-7.6)" />
<rect x="-20.2" y="-7.1" width="40.3" height="14.1" rx="7.1" transform="translate(829.7 271.8) rotate(-7.6)" />
<rect x="-21.4" y="-7.2" width="42.9" height="14.5" rx="7.2" transform="translate(827.6 286.2) rotate(-7.6)" />
<rect x="-22.7" y="-7.4" width="45.4" height="14.9" rx="7.4" transform="translate(825.5 300.8) rotate(-8.2)" />
<rect x="-24.0" y="-7.6" width="48.1" height="15.2" rx="7.6" transform="translate(823.6 315.7) rotate(-8.7)" />
<rect x="-25.4" y="-7.8" width="50.8" height="15.6" rx="7.8" transform="translate(821.8 330.9) rotate(-9.4)" />
<rect x="-26.7" y="-8.0" width="53.4" height="16.0" rx="8.0" transform="translate(820.1 346.4) rotate(-9.5)" />
<rect x="-28.0" y="-8.2" width="56.0" height="16.3" rx="8.2" transform="translate(818.3 362.1) rotate(-7.6)" />
<rect x="-29.3" y="-8.4" width="58.7" height="16.7" rx="8.4" transform="translate(816.1 378.1) rotate(-5.5)" />
<rect x="-30.7" y="-8.5" width="61.3" height="17.1" rx="8.5" transform="translate(812.5 394.1) rotate(-3.8)" />
<rect x="-32.0" y="-8.7" width="64.0" height="17.5" rx="8.7" transform="translate(808.9 410.3) rotate(-4.1)" />
<rect x="-33.0" y="-8.9" width="66.0" height="17.7" rx="8.9" transform="translate(805.5 426.8) rotate(-4.4)" />
<rect x="-34.0" y="-9.0" width="68.0" height="18.0" rx="9.0" transform="translate(802.1 443.6) rotate(-4.9)" />
<rect x="-34.5" y="-9.1" width="69.0" height="18.2" rx="9.1" transform="translate(799.1 460.6) rotate(-5.5)" />
<rect x="-35.0" y="-9.1" width="70.0" height="18.3" rx="9.1" transform="translate(796.0 477.8) rotate(-7.5)" />
<rect x="-35.3" y="-9.2" width="70.5" height="18.4" rx="9.2" transform="translate(794.4 495.2) rotate(-10.2)" />
<rect x="-35.5" y="-9.2" width="70.9" height="18.4" rx="9.2" transform="translate(793.1 512.7) rotate(-12.8)" />
<rect x="-35.2" y="-9.2" width="70.3" height="18.3" rx="9.2" transform="translate(793.7 530.2) rotate(-14.9)" />
<rect x="-35.1" y="-9.2" width="70.1" height="18.3" rx="9.2" transform="translate(794.7 547.7) rotate(-18.2)" />
<rect x="-35.0" y="-9.2" width="70.1" height="18.3" rx="9.2" transform="translate(797.4 565.0) rotate(-25.6)" />
<rect x="-34.4" y="-9.1" width="68.7" height="18.1" rx="9.1" transform="translate(804.5 581.0) rotate(-33.4)" />
<rect x="-33.5" y="-8.9" width="67.1" height="17.9" rx="8.9" transform="translate(813.4 595.9) rotate(-39.7)" />
<rect x="-32.8" y="-8.8" width="65.7" height="17.7" rx="8.8" transform="translate(823.4 609.9) rotate(-45.5)" />
<rect x="-32.4" y="-8.8" width="64.9" height="17.6" rx="8.8" transform="translate(835.1 622.3) rotate(-56.2)" />
<rect x="-32.5" y="-8.8" width="65.0" height="17.6" rx="8.8" transform="translate(849.5 631.2) rotate(-69.1)" />
<rect x="-32.3" y="-8.8" width="64.7" height="17.6" rx="8.8" transform="translate(865.7 636.0) rotate(-83.4)" />
<rect x="-32.2" y="-8.8" width="64.4" height="17.5" rx="8.8" transform="translate(882.6 636.8) rotate(-97.7)" />
<rect x="-31.9" y="-8.7" width="63.9" height="17.4" rx="8.7" transform="translate(898.8 632.1) rotate(-110.4)" />
<rect x="-31.3" y="-8.6" width="62.6" height="17.3" rx="8.6" transform="translate(913.5 623.8) rotate(-120.4)" />
<rect x="-30.4" y="-8.5" width="60.8" height="17.0" rx="8.5" transform="translate(927.1 614.1) rotate(-130.6)" />
<rect x="-28.6" y="-8.3" width="57.2" height="16.5" rx="8.3" transform="translate(937.1 601.0) rotate(-140.0)" />
<rect x="-27.6" y="-8.1" width="55.2" height="16.2" rx="8.1" transform="translate(944.5 586.6) rotate(-145.9)" />
<rect x="-27.0" y="-8.0" width="54.0" height="16.1" rx="8.0" transform="translate(951.2 572.0) rotate(-147.5)" />
<rect x="-27.2" y="-8.1" width="54.5" height="16.1" rx="8.1" transform="translate(958.7 558.0) rotate(-155.4)" />
<rect x="-27.9" y="-8.2" width="55.9" height="16.3" rx="8.2" transform="translate(961.5 542.4) rotate(-165.3)" />
<rect x="-28.7" y="-8.3" width="57.5" height="16.5" rx="8.3" transform="translate(961.3 526.3) rotate(-173.9)" />
<rect x="-29.3" y="-8.4" width="58.6" height="16.7" rx="8.4" transform="translate(960.3 510.1) rotate(-176.3)" />
<rect x="-29.8" y="-8.4" width="59.5" height="16.8" rx="8.4" transform="translate(958.7 493.8) rotate(-178.4)" />
<rect x="-30.0" y="-8.5" width="60.1" height="16.9" rx="8.5" transform="translate(956.6 477.5) rotate(-180.3)" />
<rect x="-30.1" y="-8.5" width="60.2" height="16.9" rx="8.5" transform="translate(953.9 461.2) rotate(-181.6)" />
<rect x="-30.1" y="-8.5" width="60.1" height="16.9" rx="8.5" transform="translate(950.9 445.0) rotate(-181.8)" />
<rect x="-29.7" y="-8.4" width="59.3" height="16.8" rx="8.4" transform="translate(948.1 428.7) rotate(-181.5)" />
</g>
<g clip-path="url(#bandclip)">
<polygon points="858,412 1112,433 1112,450 960,438 858,426" fill="#5a0000" opacity="0.22"/>
<polygon points="858,66 1071,66 1112,100 1112,433 858,412" fill="#f30303"/>
<polygon points="858,66 897,66 897,401 858,412" fill="#ff1010" opacity="0.35"/>
<polyline points="896,71 1071,71 1110,104.5 1110,419 896,400 896,71" fill="none" stroke="#b80000" stroke-width="1.6" opacity="0.7"/>
<polyline points="858,66 858,412 1112,433 1112,100 1071,66" fill="none" stroke="#a40000" stroke-width="1.5" opacity="0.8"/>
<polygon points="1100,66 1112,100 1391,300 1391,272 1102,66" fill="#ff1010" opacity="0.25"/>
<defs><linearGradient id="pipe" x1="0" y1="0" x2="1" y2="0"><stop offset="0" stop-color="#b80000"/><stop offset="0.3" stop-color="#f20404"/><stop offset="0.7" stop-color="#ee0000"/><stop offset="1" stop-color="#b40000"/></linearGradient></defs>
<polygon points="1116,110 1391,300 1391,330 1290,300 1205,250 1116,203" fill="#ff0c0c" opacity="0.22"/>
<polygon points="1116,203 1150,218 1195,243 1206,256 1209,290 1209,398 1116,405" fill="#fb0505" opacity="0.55"/>
<polyline points="1116,203 1150,218 1195,243 1206,258 1209,292" fill="none" stroke="#9a0000" stroke-width="2.6" opacity="0.55"/>
<rect x="1113" y="100" width="3.5" height="335" fill="#a80000" opacity="0.45"/>
<polygon points="1116,274 1180,296 1232,316 1232,326 1180,310 1116,290" fill="#ff1212" opacity="0.45"/>
<polygon points="1116,292 1180,312 1232,328 1232,344 1180,330 1116,308" fill="#c60000" opacity="0.35"/>
<polygon points="1178,300 1197,306 1197,326 1178,320" fill="none" stroke="#a00000" stroke-width="1.2" opacity="0.7"/>
<polygon points="1116,392 1209,384 1209,400 1160,410 1116,405" fill="#ff1010" opacity="0.3"/>
<polygon points="1114,405 1160,410 1207,416 1207,424 1114,412" fill="#7a0000" opacity="0.5"/>
<rect x="1229" y="262" width="17" height="260" fill="#980000" opacity="0.4"/>
<rect x="1156.700" y="411" width="6.600" height="132" fill="#d40000"/><rect x="1156.700" y="411" width="2" height="132" fill="#900000" opacity="0.5"/>
<rect x="1195" y="417" width="6.600" height="125" fill="#d00000"/><rect x="1195" y="417" width="2" height="125" fill="#900000" opacity="0.5"/>
<g fill="none" stroke-linecap="round"><path d="M1197 230 L1219 250" stroke="#de0000" stroke-width="15"/><path d="M1228 258 L1284 268" stroke="#e80202" stroke-width="17"/><path d="M1196 227 L1201 231" stroke="#ff3030" stroke-width="4"/></g>
<rect x="1262" y="257" width="22" height="16" rx="2" fill="none" stroke="#a80000" stroke-width="1.2" opacity="0.7" transform="rotate(9 1273 265)"/>
<rect x="1211" y="250" width="19.500" height="142" rx="4" fill="url(#pipe)"/>
<rect x="1246" y="284" width="20" height="106" rx="4" fill="url(#pipe)"/>
<path d="M1211 296 h19.500 M1246 306 h20" stroke="#a00000" stroke-width="1.2" opacity="0.6"/>
<polygon points="1230,326 1269,336 1269,362 1230,352" fill="#ff1212" opacity="0.55"/><polygon points="1230,352 1269,362 1269,368 1230,358" fill="#900000" opacity="0.4"/>
<polygon points="1206,318 1232,326 1232,344 1206,336" fill="#fa0808" opacity="0.5"/>
<polygon points="1206.700,360 1229,360 1225,488 1208.500,488" fill="url(#pipe)"/>
<polygon points="1245,368 1262,368 1260,488 1247,488" fill="url(#pipe)"/>
<rect x="1211.700" y="488" width="8.300" height="60" fill="#dc0000"/><rect x="1247.500" y="488" width="8.300" height="50" fill="#dc0000"/>
<polygon points="1270,338 1285,341 1285,376 1270,372" fill="#c40000" opacity="0.45"/>
<rect x="1268" y="300" width="28" height="150" fill="#b00000" opacity="0.12"/>
<g fill="none" stroke="#960000" stroke-width="1.4" opacity="0.75"><polyline points="1316,342 1316,418 1332,422"/><polyline points="1359,356 1359,426 1373,430"/></g>
<polygon points="1316,342 1340,348 1340,424 1316,418" fill="#ff1010" opacity="0.18"/><polygon points="1359,356 1380,361 1380,432 1359,426" fill="#ff1010" opacity="0.18"/>
<rect x="1324" y="375" width="10" height="11" rx="3" fill="#b80000" opacity="0.7"/><rect x="1366" y="388" width="9" height="11" rx="3" fill="#b80000" opacity="0.7"/>
</g>
<g fill="#f00000">
<rect x="799.3" y="640" width="11.2" height="62"/>
<rect x="798.3" y="667.5" width="14.2" height="33" rx="1.5" fill="#e40000"/>
<rect x="784.5" y="677" width="16" height="15" rx="4" fill="#e80000"/>
<path d="M805.0 700.0 C812.2 699.5 819.2 709.0 826.0 716.0 C832.8 723.0 840.8 733.8 846.0 742.0 C851.2 750.2 854.4 757.5 857.0 765.0 C859.6 772.5 861.2 779.2 861.5 787.0 C861.8 794.8 860.9 804.0 858.5 812.0 C856.1 820.0 852.1 827.3 847.0 835.0 C841.9 842.7 833.5 852.2 828.0 858.0 C822.5 863.8 816.4 866.5 814.0 870.0 C811.6 873.5 814.8 877.2 813.5 879.0 C812.2 880.8 808.3 881.0 806.0 881.0 C803.7 881.0 800.7 880.8 799.5 879.0 C798.3 877.2 801.8 873.5 799.0 870.0 C796.2 866.5 788.3 863.8 782.5 858.0 C776.7 852.2 768.9 842.7 764.0 835.0 C759.1 827.3 755.3 820.0 753.0 812.0 C750.7 804.0 749.8 794.8 750.0 787.0 C750.2 779.2 751.7 772.5 754.0 765.0 C756.3 757.5 759.2 749.7 764.0 742.0 C768.8 734.3 776.2 726.0 783.0 719.0 C789.8 712.0 797.8 700.5 805.0 700.0Z" fill="#f40000"/>
<circle cx="804" cy="685.5" r="2" fill="#900000"/>
</g>
<g fill="none" stroke-linecap="round">
<path d="M1166 748 C1166 764 1176 765 1188 764.500 C1200 764 1209 762 1210 751" stroke="#e00000" stroke-width="9.500"/><path d="M1213 750 C1216 753 1224 748 1230 745.500 C1238 742 1242 742 1244 737" stroke="#e00000" stroke-width="7.500"/>
<path d="M1166 748 C1166 764 1176 765 1188 764.500 C1200 764 1209 762 1210 751" stroke="#8a0000" stroke-width="9.500" stroke-dasharray="1.500 3.500" stroke-linecap="butt" opacity="0.7"/><path d="M1213 750 C1216 753 1224 748 1230 745.500 C1238 742 1242 742 1244 737" stroke="#8a0000" stroke-width="7.500" stroke-dasharray="1.500 3.500" stroke-linecap="butt" opacity="0.7"/>
<path d="M1169 561 L1169 749 M1208 554 L1208 752" stroke="#e60000" stroke-width="17.600" stroke-linecap="butt"/><path d="M1243.5 585 L1243.5 738" stroke="#e60000" stroke-width="16.600" stroke-linecap="butt"/>
<path d="M1169 561 L1169 749 M1208 554 L1208 752" stroke="#7c0000" stroke-width="17.600" stroke-dasharray="1.300 3.150" stroke-linecap="butt" opacity="0.62"/><path d="M1243.5 585 L1243.5 738" stroke="#7c0000" stroke-width="16.600" stroke-dasharray="1.300 3.150" stroke-linecap="butt" opacity="0.62"/>
<path d="M1158.5 530 L1158.5 545 C1158.5 556 1163 561 1171 563" stroke="#e60000" stroke-width="5"/>
<path d="M1196 528 L1196 538 C1196 548 1200 553 1207 555" stroke="#e60000" stroke-width="5"/>
<path d="M1215 526 L1215 580 C1215 590 1211 595 1205 597" stroke="#e60000" stroke-width="5"/>
<path d="M1251 522 L1251 570 C1251 580 1247 585 1242 587" stroke="#e60000" stroke-width="5"/>
</g>
</svg>
<div class="abs" style="left:744px;top:993px;width:161px;height:40px;border-radius:20px;background:#fff;box-shadow:0 1.5px 4px rgba(0,0,0,.32)"></div>
<div class="abs" style="left:912px;top:993px;width:240px;height:40px;border-radius:20px;background:#fff;box-shadow:0 1.5px 4px rgba(0,0,0,.32)"></div>
<div class="abs" style="left:1160px;top:993px;width:40px;height:40px;border-radius:20px;background:#fff;box-shadow:0 1.5px 4px rgba(0,0,0,.32)"></div>
<div class="abs" style="left:1208px;top:993px;width:40px;height:40px;border-radius:20px;background:#fff;box-shadow:0 1.5px 4px rgba(0,0,0,.32)"></div>
<svg class="abs" style="left:740px;top:990px" width="520" height="50" viewBox="740 990 520 50" fill="none" stroke-linecap="round" stroke-linejoin="round">
<!-- walk -->
<g fill="#7f8694"><circle cx="764.4" cy="1007" r="1.35"/><path d="M763.6 1009.2 L765.6 1009.2 L766.6 1011.4 L769 1011.5 L769 1012.8 L765.9 1012.8 L765.3 1011.8 L764.9 1014.6 L766.8 1016.6 L766.8 1020.8 L765.4 1020.8 L765.4 1017.3 L763.5 1015.6 L761.8 1020.8 L760.3 1020.8 L762.3 1014.4 L762.5 1011.3 L760.9 1011.9 L760.6 1014 L759.3 1014 L759.6 1011 Z"/></g>
<!-- camera A -->
<g><rect x="795" y="1005.8" width="13.6" height="15" rx="2.6" fill="#7f8694"/><path d="M808.4 1011.6 L813 1008.6 L813 1018.6 L808.4 1015.4Z" fill="#7f8694"/><path d="M798.2 1017.3 L801.8 1009.2 L805.4 1017.3 M799.5 1014.8 L804.1 1014.8" stroke="#fff" stroke-width="1.5"/></g>
<!-- focus cube -->
<g stroke="#7f8694" stroke-width="1.5"><path d="M835 1008.2 v-2 a2.2 2.2 0 0 1 2.2 -2.2 h2 M848.6 1004 h2 a2.2 2.2 0 0 1 2.2 2.2 v2 M852.8 1017.4 v2 a2.2 2.2 0 0 1 -2.2 2.2 h-2 M839.2 1021.6 h-2 a2.2 2.2 0 0 1 -2.2 -2.2 v-2"/></g>
<path d="M843.9 1008.6 L848 1010.6 L848 1015.2 L843.9 1017.3 L839.8 1015.2 L839.8 1010.6Z" fill="#7f8694"/><path d="M843.9 1008.9 L847.6 1010.7 L843.9 1012.6 L840.2 1010.7Z" fill="#fff" opacity="0.9"/><path d="M844.4 1013.2 L847.5 1011.6 L847.5 1015 L844.4 1016.6Z" fill="#fff" opacity="0.85"/>
<!-- fullscreen -->
<g stroke="#7f8694"><rect x="874.7" y="1004.7" width="18.8" height="16.6" stroke-width="1.5" stroke-linejoin="miter"/><path d="M878 1011 v-3.2 h3.4 M886.8 1007.8 h3.4 v3.2 M890.2 1015 v3.2 h-3.4 M881.4 1018.2 h-3.4 v-3.2" stroke-width="1.5" stroke-linecap="butt" stroke-linejoin="miter"/></g>
<!-- cursor -->
<path d="M927 1004.8 L927 1018.4 L930.3 1015.4 L933 1021.3 L935.2 1020.3 L932.5 1014.5 L937.6 1014.3Z" fill="#1a8fd8"/>
<!-- three eyes -->
<g stroke="#c6c8ce" stroke-width="0.9"><ellipse cx="971.7" cy="1009.2" rx="4.6" ry="2.7"/><ellipse cx="966.3" cy="1016.8" rx="4.6" ry="2.7"/><ellipse cx="977.2" cy="1016.8" rx="4.6" ry="2.7"/></g><g fill="#c6c8ce"><circle cx="971.7" cy="1009.2" r="1.5"/><circle cx="966.3" cy="1016.8" r="1.5"/><circle cx="977.2" cy="1016.8" r="1.5"/></g>
<!-- focus eye crossed -->
<g stroke="#c6c8ce" stroke-width="1.5"><path d="M1003 1008.2 v-2 a2.2 2.2 0 0 1 2.2 -2.2 h2 M1016.6 1004 h2 a2.2 2.2 0 0 1 2.2 2.2 v2 M1020.8 1017.4 v2 a2.2 2.2 0 0 1 -2.2 2.2 h-2 M1007.2 1021.6 h-2 a2.2 2.2 0 0 1 -2.2 -2.2 v-2"/></g>
<g stroke="#c6c8ce" stroke-width="1"><path d="M1005.6 1012.8 C1008 1009 1015.800 1009 1018.2 1012.800 C1015.800 1016.600 1008 1016.600 1005.6 1012.800Z"/><circle cx="1011.9" cy="1012.8" r="1.6"/><path d="M1006.2 1008 L1017.6 1018.6" stroke-width="1.2"/></g>
<!-- focus dot -->
<g stroke="#c6c8ce" stroke-width="1.5"><path d="M1043 1008.2 v-2 a2.2 2.2 0 0 1 2.2 -2.2 h2 M1056.600 1004 h2 a2.2 2.2 0 0 1 2.2 2.2 v2 M1060.8 1017.4 v2 a2.2 2.2 0 0 1 -2.2 2.2 h-2 M1047.2 1021.6 h-2 a2.2 2.2 0 0 1 -2.2 -2.2 v-2"/></g><circle cx="1051.900" cy="1012.9" r="2.5" fill="#c6c8ce"/>
<!-- focus dot A blue -->
<g stroke="#1a8fd8" stroke-width="1.6"><path d="M1083 1008.2 v-2 a2.2 2.2 0 0 1 2.2 -2.2 h2 M1096.600 1004 h2 a2.2 2.2 0 0 1 2.2 2.2 v2 M1087.2 1021.6 h-2 a2.2 2.2 0 0 1 -2.2 -2.2 v-2"/><path d="M1094.200 1021.400 L1097.500 1013.200 L1100.800 1021.400 M1095.400 1018.800 L1099.600 1018.800" stroke-width="1.4"/></g><circle cx="1090.6" cy="1012.6" r="2.4" fill="#1a8fd8"/>
<!-- sliders -->
<g stroke="#7f8694" stroke-width="1.5"><path d="M1123.500 1007.400 h17.400 M1123.500 1012.900 h17.400 M1123.500 1018.400 h17.400"/><circle cx="1135.800" cy="1007.400" r="2" fill="#fff"/><circle cx="1128.400" cy="1012.900" r="2" fill="#fff"/><circle cx="1135.800" cy="1018.400" r="2" fill="#fff"/></g>
<!-- cube -->
<g stroke="#7f8694" stroke-width="1.4"><path d="M1180 1003.600 L1189 1008 L1189 1017.600 L1180 1022 L1171 1017.600 L1171 1008Z"/><path d="M1171 1008 L1180 1012.400 L1189 1008 M1180 1012.400 L1180 1022"/></g><path d="M1180 1012.400 L1189 1008 L1189 1017.600 L1180 1022Z" fill="#7f8694"/>
<!-- info -->
<circle cx="1227.600" cy="1013" r="7.100" stroke="#7f8694" stroke-width="0.9"/><path d="M1227.600 1012 v4.600" stroke="#7f8694" stroke-width="1.1"/><circle cx="1227.600" cy="1009.600" r="0.75" fill="#7f8694"/>
</svg>

</div>
<div id="right">
<div class="tab" style="left:1402px;width:86px">Parameters</div>
<div class="hline" style="left:1393px;top:65px;width:527px;background:#bcd3ee"></div>
<div class="tbl" style="left:1401px;top:70px;width:511px;height:979px">
<div class="hdr" style="width:496px;height:22px;line-height:20px"><div class="c" style="left:0;width:247px;border-left:none;padding-left:4px;height:22px">Element ID</div><div class="c" style="left:247px;width:249px;padding-left:4px;height:22px">6123049</div></div>
<div class="row" style="top:23px;height:26px;line-height:25px;width:496px;background:#b2b2b6"><i class="tri dn" style="left:14.200px;top:7.800px;border-left-width:6.850px;border-right-width:6.850px;border-top-width:10.400px"></i><div class="c" style="left:46px;width:300px;height:26px">Instance Parameters</div></div>
<div class="row d" style="top:51px;width:496px">
<div class="c b" style="left:38px;width:205px">Constraints</div>
</div>
<div class="row" style="top:73px;width:496px">
<div class="c" style="left:50px;width:195px">Elevation from Level</div>
<div class="c" style="left:252px;width:240px">3&#x27; - 8 11/32&quot;</div>
</div>
<div class="row d" style="top:95px;width:496px">
<div class="c" style="left:50px;width:195px">Level</div>
<div class="c" style="left:252px;width:240px">LEVEL 09</div>
</div>
<div class="row" style="top:117px;width:496px">
<div class="c b" style="left:38px;width:205px">Data</div>
</div>
<div class="row d" style="top:139px;width:496px">
<div class="c" style="left:50px;width:195px">drofus_occurrence_id</div>
</div>
<div class="row" style="top:161px;width:496px">
<div class="c b" style="left:38px;width:205px">Electrical - Loads</div>
</div>
<div class="row d" style="top:183px;width:496px">
<div class="c" style="left:50px;width:195px">Circuit Number</div>
</div>
<div class="row" style="top:205px;width:496px">
<div class="c" style="left:50px;width:195px">Panel</div>
</div>
<div class="row d" style="top:227px;width:496px">
<div class="c b" style="left:38px;width:205px">IFC Parameters</div>
</div>
<div class="row" style="top:249px;width:496px">
<div class="c" style="left:50px;width:195px">Export to IFC</div>
<div class="c" style="left:252px;width:240px">By Type</div>
</div>
<div class="row d" style="top:271px;width:496px">
<div class="c" style="left:50px;width:195px">Export to IFC As</div>
</div>
<div class="row" style="top:293px;width:496px">
<div class="c" style="left:50px;width:195px">IFC Predefined Type</div>
</div>
<div class="row d" style="top:315px;width:496px">
<div class="c" style="left:50px;width:195px">IfcGUID</div>
<div class="c" style="left:252px;width:240px">3dMRQeQrH0UA8ZJeRRiuoe</div>
</div>
<div class="row" style="top:337px;width:496px">
<div class="c b" style="left:38px;width:205px">Identity Data</div>
</div>
<div class="row d" style="top:359px;width:496px">
<div class="c" style="left:50px;width:195px">Comments</div>
</div>
<div class="row" style="top:381px;width:496px">
<div class="c" style="left:50px;width:195px">Image</div>
<div class="c" style="left:252px;width:240px">-1</div>
</div>
<div class="row d" style="top:403px;width:496px">
<div class="c" style="left:50px;width:195px">Mark</div>
</div>
<div class="row" style="top:425px;width:496px">
<div class="c b" style="left:38px;width:205px">Other</div>
</div>
<div class="row d" style="top:447px;width:496px">
<div class="c" style="left:50px;width:195px">Existing/New</div>
</div>
<div class="row" style="top:469px;width:496px">
<div class="c" style="left:50px;width:195px">Extensions.Buffer</div>
</div>
<div class="row d" style="top:491px;width:496px">
<div class="c" style="left:50px;width:195px">Extensions.Buffer1</div>
</div>
<div class="row" style="top:513px;width:496px">
<div class="c" style="left:50px;width:195px">Extensions.Buffer2</div>
</div>
<div class="row d" style="top:535px;width:496px">
<div class="c" style="left:50px;width:195px">Extensions.Buffer3</div>
</div>
<div class="row" style="top:557px;width:496px">
<div class="c" style="left:50px;width:195px">Extensions.Buffer4</div>
</div>
<div class="row d" style="top:579px;width:496px">
<div class="c" style="left:50px;width:195px">Extensions.Buffer5</div>
</div>
<div class="row" style="top:601px;width:496px">
<div class="c" style="left:50px;width:195px">Extensions.Buffer6</div>
</div>
<div class="row d" style="top:623px;width:496px">
<div class="c" style="left:50px;width:195px">Extensions.Buffer7</div>
</div>
<div class="row" style="top:645px;width:496px">
<div class="c" style="left:50px;width:195px">Extensions.Buffer8</div>
</div>
<div class="row d" style="top:667px;width:496px">
<div class="c" style="left:50px;width:195px">Extensions.Buffer9</div>
</div>
<div class="row" style="top:689px;width:496px">
<div class="c" style="left:50px;width:195px">Extensions.Extensions</div>
</div>
<div class="row d" style="top:711px;width:496px">
<div class="c" style="left:50px;width:195px">Extensions.Group</div>
</div>
<div class="row" style="top:733px;width:496px">
<div class="c" style="left:50px;width:195px">Extensions.ID</div>
</div>
<div class="row d" style="top:755px;width:496px">
<div class="c" style="left:50px;width:195px">Extensions.Parameters</div>
</div>
<div class="row" style="top:777px;width:496px">
<div class="c" style="left:50px;width:195px">Extensions.Position</div>
</div>
<div class="row d" style="top:799px;width:496px">
<div class="c" style="left:50px;width:195px">Extensions.Tag</div>
</div>
<div class="row" style="top:821px;width:496px">
<div class="c" style="left:50px;width:195px">Extensions.ViewId</div>
</div>
<div class="row d" style="top:843px;width:496px">
<div class="c" style="left:50px;width:195px">LabEqTypeMark</div>
</div>
<div class="row" style="top:865px;width:496px">
<div class="c" style="left:50px;width:195px">Skanska Unit Cost</div>
<div class="c" style="left:252px;width:240px">0</div>
</div>
<div class="row d" style="top:887px;width:496px">
<div class="c b" style="left:38px;width:205px">Phasing</div>
</div>
<div class="row" style="top:909px;width:496px">
<div class="c" style="left:50px;width:195px">Phase Created</div>
<div class="c" style="left:252px;width:240px">New Construction</div>
</div>
<div class="row d" style="top:931px;width:496px">
<div class="c" style="left:50px;width:195px">Phase Demolished</div>
<div class="c" style="left:252px;width:240px">None</div>
</div>
<div class="row" style="top:953px;width:496px">
<div class="c b" style="left:38px;width:205px">Text</div>
</div>
<div class="row d" style="top:975px;width:496px">
<div class="c" style="left:50px;width:195px">Bed Type</div>
</div>
<div class="sb" style="left:499px;top:2px;width:8px;height:432px"></div>
</div></div>
<div class="vsplit" style="left:599px"></div><div class="vsplit" style="left:1391px"></div>
<div id="status"><span style="left:8px">Ready | UI: 11 ms</span><span style="left:158px;letter-spacing:-0.5px">UI FPS: 47.4</span><span style="left:258px;letter-spacing:-0.5px">Render FPS: 120</span><span style="right:8px">License valid until 2026-03-02 | v1.3.7.0</span></div>
<svg class="abs" style="left:390px;top:45px" width="120" height="75" viewBox="390 45 120 75" fill="none" stroke="#e8141c" stroke-width="2.700" stroke-linecap="round" stroke-linejoin="round">
<path d="M402.800 65.800 C407 63 410 60.500 414.300 58.900 C416.500 58 418.500 57.300 421.250 57.200 L444.200 57.200 C447.500 57.300 450 58.400 452.500 60 C456.500 62.500 460 65.500 462.900 68.600 C465.500 71.500 467.500 74.500 469.200 77.600 C471 81.500 472.300 85.500 473.300 89.400 L477.500 109.600"/>
<path d="M460.100 92.900 C461.500 95.500 464 97.500 466.400 99.200 C470.500 102.500 474 106 477.500 109.600 C479.800 107 481.200 103.800 482.400 100.600 C483.200 98 484 95.800 485.100 93.600 C486 91.900 487.200 90.800 488.600 90.100"/>
</svg>

</body>
</html>
